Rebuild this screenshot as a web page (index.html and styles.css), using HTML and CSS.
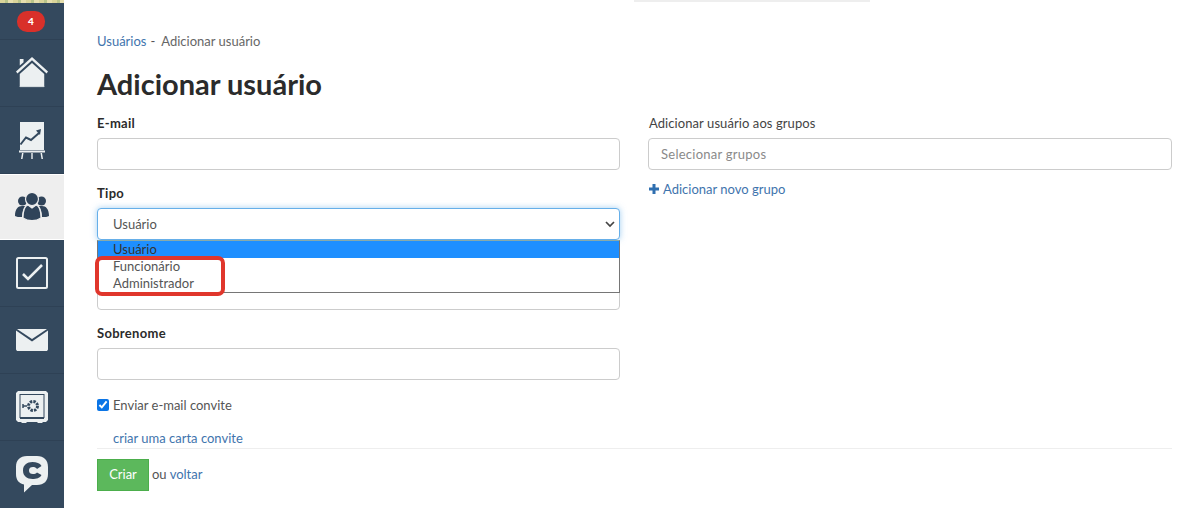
FILE: index.html
```html
<!DOCTYPE html>
<html lang="pt">
<head>
<meta charset="utf-8">
<title>Adicionar usuário</title>
<link rel="stylesheet" href="styles.css">
</head>
<body>
<div class="app">
  <nav class="side">
    <div class="strip"></div>
    <div class="badge-row"><span class="badge">4</span></div>
    <a class="item">
      <svg width="34" height="32" viewBox="0 0 36 34"><path fill="#ecf0f1" d="M5 2h4v3.500l-4 3.500zM18 0 35 15.500 33.500 17.500 18 3.500 2.500 17.500 1 15.500zM5 18 18 6.500 31 18V32H5z"/><path fill="#cfd6da" d="M5 31h26v1H5z"/></svg>
    </a>
    <a class="item">
      <svg width="26" height="37" viewBox="0 0 26 37"><path fill="#ecf0f1" d="M1 0H25V28H1z"/><path fill="#ecf0f1" d="M0 28.500H26V30.500H0zM3 31h1.500l-1 6H2zM12.300 31h1.400v6h-1.400zM21.500 31H23l1 6h-1.500z"/><path fill="none" stroke="#34495e" stroke-width="2" d="M1.500 22.500 7 15.500l5 2.500 8-7"/><path fill="#34495e" d="M17 8.500 22 7l-1 6z"/></svg>
    </a>
    <a class="item item-on">
      <svg width="34" height="30" viewBox="0 0 34 30"><g fill="#2f4359"><circle cx="7.500" cy="9" r="4.500"/><circle cx="26.500" cy="9" r="4.500"/><path d="M0 24C0 17 3 14 7 14h3C8 17 7 21 7 25 4 25 1.500 25 0 24zM34 24c0-7-3-10-7-10h-3c2 3 3 7 3 11 3 0 5.500 0 7-1z"/></g><g fill="#2f4359" stroke="#eee" stroke-width="1.200"><circle cx="17" cy="7" r="6.500"/><path d="M8 26c0-8 2-12 5-13l4 3 4-3c3 1 5 5 5 13-5 3.500-13 3.500-18 0z"/></g></svg>
    </a>
    <a class="item">
      <svg width="32" height="32" viewBox="0 0 32 32"><rect x="1" y="1" width="30" height="30" rx="1.500" fill="none" stroke="#ecf0f1" stroke-width="2"/><path fill="none" stroke="#ecf0f1" stroke-width="2.600" d="M7 17l5 5L26 8"/></svg>
    </a>
    <a class="item">
      <svg width="32" height="22" viewBox="0 0 32 22"><path fill="#ecf0f1" d="M1 0H31L16 10zM0 1.500 16 12.500 32 1.500V20.500L31 22H1L0 20.500z"/></svg>
    </a>
    <a class="item">
      <svg width="32" height="32" viewBox="0 0 32 32"><path fill="#ecf0f1" d="M2 0H30L32 2V29L30 31H27L26 32H22L21 31H11L10 32H6L5 31H2L0 29V2z"/><rect x="4" y="3.500" width="24" height="23" fill="none" stroke="#34495e" stroke-width="1"/><path fill="#34495e" d="M4 26H28V28H4z"/><circle cx="17" cy="15" r="4.500" fill="none" stroke="#34495e" stroke-width="3" stroke-dasharray="2.400 1.100"/><path fill="none" stroke="#34495e" stroke-width="1.500" d="M7 15h4M7 13v4"/></svg>
    </a>
    <a class="item item-last">
      <svg width="32" height="37" viewBox="0 0 32 37"><path fill="#ecf0f1" fill-rule="evenodd" d="M11 0H21C28 0 32 4 32 11V18C32 25 28 29 21 29H16L8 36.500 8 28.500C3 27.500 0 24 0 18V11C0 4 4 0 11 0zM16.500 6C11 6 7 9 7 14.500S11 23 16.500 23C20.500 23 24 22 25.500 19L21 16.500C20 18 18.500 18 17 18 14.500 18 13 17 13 14.500S14.500 11 17 11C18.500 11 20 11.500 21 13L25.500 10C24 7 20.500 6 16.500 6z"/></svg>
    </a>
  </nav>
  <main class="main">
    <div class="topbar"></div>
    <div class="crumbs"><a class="link">Usuários</a><span class="sep">-</span><span>Adicionar usuário</span></div>
    <h1 class="title">Adicionar usuário</h1>
    <div class="cols">
      <section class="col">
        <label class="lbl">E-mail</label>
        <div class="field"></div>
        <label class="lbl">Tipo</label>
        <div class="select-wrap">
          <div class="field select">
            <span>Usuário</span>
            <svg class="chev" width="10" height="7" viewBox="0 0 10 7"><path fill="none" stroke="#444" stroke-width="1.700" d="M1 1l4 4 4-4"/></svg>
          </div>
          <div class="menu">
            <div class="opt opt-on">Usuário</div>
            <div class="opt">Funcionário</div>
            <div class="opt">Administrador</div>
          </div>
          <div class="mark"></div>
        </div>
        <label class="lbl">Nome</label>
        <div class="field"></div>
        <label class="lbl">Sobrenome</label>
        <div class="field"></div>
        <div class="check"><input type="checkbox" checked class="box"><span>Enviar e-mail convite</span></div>
        <a class="link letter">criar uma carta convite</a>
      </section>
      <section class="col">
        <label class="lbl lbl-plain">Adicionar usuário aos grupos</label>
        <div class="field ph">Selecionar grupos</div>
        <a class="link addgroup"><svg width="10" height="10" viewBox="0 0 10 10"><path fill="#2f6fb0" d="M3.500 0h3v3.500H10v3H6.500V10h-3V6.500H0v-3h3.500z"/></svg>Adicionar novo grupo</a>
      </section>
    </div>
    <div class="actions"><button class="btn">Criar</button><span class="back">ou <a class="link">voltar</a></span></div>
  </main>
</div>
</body>
</html>
```
FILE: styles.css
```css
* { box-sizing: border-box; }
html, body { margin: 0; height: 508px; overflow: hidden; background: #fff; }
body { font-family: "Lato", "Liberation Sans", sans-serif; font-size: 13px; color: #555; }
.app { display: flex; height: 508px; }
.side { width: 64px; flex: none; background: #34495e; display: flex; flex-direction: column; }
.strip { height: 3px; background: repeating-linear-gradient(90deg, #d9d49a 0 5px, #b9c48a 5px 8px, #e6dfae 8px 13px); }
.badge-row { height: 37px; padding-top: 8px; padding-right: 2px; display: flex; justify-content: center; align-items: flex-start; border-bottom: 1px solid #2e4155; }
.badge { width: 28px; height: 21px; border-radius: 10px; background: #d9302a; color: #fff; font-size: 10px; font-weight: 900; text-align: center; line-height: 21px; }
.item { height: 67px; display: flex; align-items: center; justify-content: center; border-bottom: 1px solid #2e4155; padding-right: 1px; }
.item-on { background: #eeeeee; height: 66px; border-bottom: 1px solid #fff; border-top: 1px solid #fff; }
.item-last { border-bottom: 0; }
.main { flex: 1; padding: 0 28px 0 33px; position: relative; }
.topbar { position: absolute; left: 570px; top: 0; width: 236px; height: 2px; background: #eeeeee; }
.crumbs { margin-top: 34px; height: 14px; line-height: 14px; font-size: 13px; color: #666; display: flex; }
.sep { margin: 0 6px 0 4px; color: #555; }
.link { color: #3f74ad; }
.title { margin: 20px 0 0; font-size: 29px; line-height: 32px; font-weight: 700; color: #2b2b2b; }
.cols { display: grid; grid-template-columns: 523px 1fr; column-gap: 28px; margin-top: 15px; }
.col { display: flex; flex-direction: column; align-items: stretch; }
.lbl { font-size: 13px; font-weight: 700; color: #2b2b2b; line-height: 16px; height: 16px; margin-bottom: 7px; letter-spacing: .3px; }
.lbl-plain { font-weight: 400; color: #444; padding-left: 1px; letter-spacing: .08px; }
.field { height: 32px; border: 1px solid #ccc; border-radius: 4px; background: #fff; margin-bottom: 15px; }
.ph { padding-left: 12px; line-height: 30px; color: #8a8a8a; margin-bottom: 0; letter-spacing: .25px; }
.select-wrap { position: relative; height: 32px; margin-bottom: 15px; }
.select { border-color: #66afe9; box-shadow: 0 0 6px rgba(102, 175, 233, .6); display: flex; align-items: center; justify-content: space-between; padding: 0 2px 0 15px; margin: 0; color: #555; }
.chev { margin-right: 2px; }
.menu { position: absolute; left: 0; right: 0; top: 32px; height: 53px; background: #fff; border: 1px solid #767676; border-top-color: #8aa; z-index: 2; }
.opt { height: 17px; line-height: 17px; padding-left: 15px; color: #555; }
.opt-on { background: #1e8fff; color: #333; }
.mark { position: absolute; left: -2px; top: 48px; width: 130px; height: 40px; border: 4px solid #e0362c; border-radius: 7px; z-index: 3; }
.check { display: flex; align-items: center; height: 16px; margin-top: 2px; color: #555; }
.box { width: 12px; height: 12px; margin: 0 4px 0 0; accent-color: #0b75e6; }
.letter { margin: 17px 0 0 16px; line-height: 16px; }
.addgroup { margin-top: 11px; padding-left: 1px; line-height: 16px; display: flex; align-items: center; gap: 4px; }
.actions { margin-top: 2px; border-top: 1px solid #eee; padding-top: 10px; display: flex; align-items: center; gap: 3px; }
.back { margin-top: -2px; }
.btn { width: 52px; height: 32px; background: #5cb85c; border: 1px solid #4cae4c; color: #fff; font: 400 13px "Lato", "Liberation Sans", sans-serif; padding: 0 0 2px; }
```
